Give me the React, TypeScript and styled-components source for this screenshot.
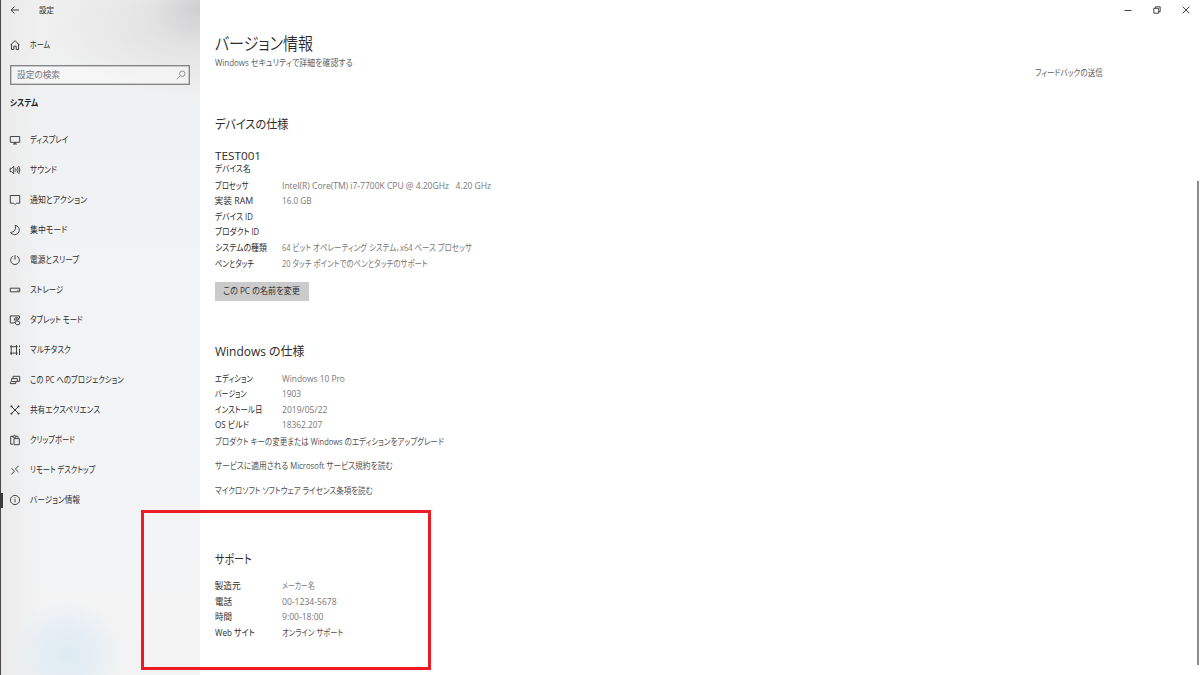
import React, { useLayoutEffect, useRef } from 'react';
import styled, { createGlobalStyle } from 'styled-components';

const GlobalStyle = createGlobalStyle`
  * { box-sizing: border-box; }
  body {
    margin: 0;
    background: #fff;
    font-family: 'Open Sans', 'Noto Sans CJK JP', sans-serif;
    font-feature-settings: 'palt';
    color: #1c1c1c;
    overflow: hidden;
  }
`;

const Window = styled.div`
  position: relative;
  display: flex;
  width: 1200px;
  height: 675px;
  background: #fff;
`;

const Sidebar = styled.aside`
  display: flex;
  flex-direction: column;
  width: 200px;
  height: 675px;
  border-left: 1px solid #4a484b;
  background:
    radial-gradient(circle 56px at 65px 655px, #deebf3 0%, rgba(224, 236, 244, 0.75) 45%, rgba(240, 243, 245, 0) 100%),
    radial-gradient(ellipse 50px 36px at 200px 8px, #cfced0 0%, rgba(212, 211, 213, 0.6) 50%, rgba(225, 225, 226, 0) 100%),
    radial-gradient(ellipse 150px 75px at 195px 25px, #dddcdd 0%, rgba(228, 227, 228, 0.6) 55%, rgba(240, 240, 240, 0) 100%),
    linear-gradient(90deg, #ebebeb 0, rgba(240, 240, 241, 0) 40px),
    linear-gradient(180deg, #efefef 0, #f0f1f2 90px, #f2f3f5 340px, #f3f4f6 500px, #f3f3f3 675px);
`;

const Row = styled.div<{ $h: number; $pl?: number; $gap?: number; $mt?: number }>`
  display: flex;
  align-items: center;
  height: ${p => p.$h}px;
  margin-top: ${p => p.$mt ?? 0}px;
  padding-left: ${p => p.$pl ?? 0}px;
  gap: ${p => p.$gap ?? 0}px;
  flex: none;
`;

const Search = styled.div`
  display: flex;
  align-items: center;
  justify-content: space-between;
  width: 180px;
  height: 20px;
  margin: 0 0 0 9px;
  padding: 0 2px 0 6px;
  border: 1px solid #858586;
  box-shadow: inset 0 0 0 0.5px #a0a0a1;
  background: rgba(255, 255, 255, 0.4);
  flex: none;
`;

const Nav = styled.nav`
  display: flex;
  flex-direction: column;
  padding-top: 4px;
`;

const NavItem = styled.a<{ $active?: boolean }>`
  display: flex;
  align-items: center;
  gap: 8.8px;
  height: 30px;
  padding-left: 8px;
  position: relative;
  &::before {
    content: '';
    position: absolute;
    left: -1px;
    top: 8px;
    width: 2.5px;
    height: 15px;
    background: ${p => (p.$active ? '#3c3c3e' : 'transparent')};
  }
`;

const Icon = styled.svg<{ $color?: string }>`
  width: 12px;
  height: 12px;
  flex: none;
  fill: none;
  stroke: ${p => p.$color ?? '#3a3a3a'};
  stroke-width: 0.95;
`;

const Main = styled.main`
  display: flex;
  flex-direction: column;
  flex: 1;
  padding: 33px 0 0 14.6px;
`;

const Aside = styled.div`
  width: 165.4px;
`;

const Caption = styled.div`
  display: flex;
  align-items: center;
  gap: 17px;
  height: 20px;
  padding-left: 87.4px;
`;

const Feedback = styled.div`
  padding-top: 45px;
`;

const Section = styled.section<{ $mt: number }>`
  display: flex;
  flex-direction: column;
  margin-top: ${p => p.$mt}px;
`;

const DeviceName = styled.div`
  margin-top: 15px;
`;

const SpecList = styled.dl<{ $mt: number }>`
  display: grid;
  grid-template-columns: 67.8px auto;
  grid-auto-rows: 15.6px;
  align-items: center;
  justify-content: start;
  margin: ${p => p.$mt}px 0 0;
`;

const Term = styled.dt`
  margin: 0;
`;

const Detail = styled.dd`
  margin: 0;
`;

const RenameButton = styled.button`
  display: flex;
  align-items: center;
  width: 94px;
  height: 19px;
  margin: 10.4px 0 0 0.4px;
  padding: 0 0 0 8.5px;
  border: 0;
  background: #cbcbcb;
  font: inherit;
  font-feature-settings: inherit;
  color: inherit;
`;

const Highlight = styled.div`
  position: absolute;
  left: 141px;
  top: 510px;
  width: 290px;
  height: 160px;
  border: 3px solid #ed1c24;
`;

const ScrollThumb = styled.div`
  position: absolute;
  left: 1197px;
  top: 181px;
  width: 2px;
  height: 484px;
  background: #8c8c8c;
`;

const Label = styled.span<{ $size: number; $color: string; $weight: number; $lh: number }>`
  display: block;
  width: max-content;
  white-space: pre;
  transform-origin: 0 50%;
  font-size: ${p => p.$size}px;
  font-weight: ${p => p.$weight};
  line-height: ${p => p.$lh}px;
  color: ${p => p.$color};
`;

type TextProps = { children: string; w: number; size?: number; color?: string; weight?: number; lh?: number };

// Condenses or widens a label so that it takes exactly the given width.
function Text({ children, w, size = 8.75, color = '#2b2b2b', weight = 400, lh = 15 }: TextProps) {
  const ref = useRef<HTMLSpanElement>(null);
  useLayoutEffect(() => {
    const fit = () => {
      const el = ref.current;
      if (el) el.style.transform = `scaleX(${w / el.offsetWidth})`;
    };
    fit();
    document.fonts.ready.then(fit);
  }, [w, children]);
  return (
    <Label ref={ref} $size={size} $color={color} $weight={weight} $lh={lh}>
      {children}
    </Label>
  );
}

const icons: Record<string, React.ReactNode> = {
  back: <path d="M10 6H2M5.500 2.500 2 6l3.500 3.500" />,
  home: <path d="M1.500 6 6 1.700 10.500 6M2.500 5.200v5.300h2.300V7.200h2.400v3.300h2.300V5.200" />,
  search: <><circle cx="7.300" cy="4.700" r="2.700" /><path d="M5.400 6.600 1.800 10.200" /></>,
  display: <><path d="M1.300 2.500h9.400v5.800H1.300zM4 10h4" /><path d="M6 8.300v1.700" strokeWidth="1.400" /></>,
  sound: <path d="M1.200 4.300h1.500L4.800 2.300v7.400L2.700 7.700H1.200zM6.600 4.400q1 1.600 0 3.200M8.200 3.200q1.800 2.800 0 5.600M9.700 2q2.400 4 0 8" />,
  notify: <path d="M1.300 1.500h9.400v7.700H7.400L6 10.600 4.600 9.200H1.300z" />,
  moon: <path d="M6 1.400C8.800 1.800 10.500 4 10.300 6.400 10 9 8 10.700 5.400 10.600 3.800 10.500 2.400 9.700 1.600 8.400 5.200 8.300 7.600 5.300 6 1.400z" />,
  power: <path d="M6 1v4.600M4 2.200a4.400 4.400 0 1 0 4 0" />,
  storage: <path d="M1.300 4.200h9.400v3.600H1.300zM8.300 6.300h1.200" />,
  tablet: <><path d="M5 9H1.300V1.900h9.200v2.600" /><path d="M7 8V5q.6-.7 1.100 0v2l2.200.6q.6.200.4.900L10.100 10.700H7.500L5.400 8.300q.5-.8 1.600.1M5.300 6.500q-.2-3 2.200-3.200 2.100.1 2.300 2.700" /></>,
  multi: <path d="M1 2.700h7.700M1 9.100h7.700M2.200 1v10M7.500 1v10M10.500 1.300v2M10.500 4.800v6.200" />,
  project: <path d="M4 4.500V2.300h6.700v5H8.300M2.600 4.600h5.700v3H2.600zM1.300 7.600v2h5.400v-2" />,
  share: <><path d="M2.500 2.500 9.500 9.500M9.500 2.500 2.500 9.500" /><path d="M1.600 2.400h1.800M8.600 2.400h1.800M1.600 9.600h1.800M8.600 9.600h1.800M5 6h2" strokeWidth="1.800" /></>,
  clipboard: <path d="M4 10.200H1.700V2.300h2M7 2.300h2v1.600M3.700 3.200V1.900h.9q.8-1.400 1.500 0h.9v1.300zM5 4.600h5.300v6.100H5z" />,
  remote: <path d="M2.500 4.300 5.500 7.200 2.300 10.300M9.700 1.700 6.400 5 9.500 8" />,
  info: <><circle cx="6" cy="6" r="4.600" /><path d="M6 5.200v3.200M6 3.300v1" /></>,
  minimise: <path d="M2.500 6.500h7" />,
  restore: <path d="M2.800 4.300h4.900v4.900H2.800zM4.300 4.300V2.800h4.900v4.900H7.700" />,
  close: <path d="m2.700 2.700 6.600 6.600M9.300 2.700 2.700 9.300" />,
};

const Glyph = ({ name, color }: { name: string; color?: string }) => (
  <Icon viewBox="0 0 12 12" $color={color}>{icons[name]}</Icon>
);

const nav: [string, string, number][] = [
  ['display', 'ディスプレイ', 38.5],
  ['sound', 'サウンド', 27],
  ['notify', '通知とアクション', 57],
  ['moon', '集中モード', 37],
  ['power', '電源とスリープ', 49],
  ['storage', 'ストレージ', 33],
  ['tablet', 'タブレット モード', 53],
  ['multi', 'マルチタスク', 40.5],
  ['project', 'この PC へのプロジェクション', 93.5],
  ['share', '共有エクスペリエンス', 70.5],
  ['clipboard', 'クリップボード', 45],
  ['remote', 'リモート デスクトップ', 65.5],
  ['info', 'バージョン情報', 50],
];

type Spec = [string, number, string?, number?, string?];
const device: Spec[] = [
  ['プロセッサ', 33.5, 'Intel(R) Core(TM) i7-7700K CPU @ 4.20GHz   4.20 GHz', 209],
  ['実装 RAM', 39, '16.0 GB', 30],
  ['デバイス ID', 38],
  ['プロダクト ID', 44],
  ['システムの種類', 52, '64 ビット オペレーティング システム、x64 ベース プロセッサ', 190],
  ['ペンとタッチ', 39, '20 タッチ ポイントでのペンとタッチのサポート', 146],
];
const windows: Spec[] = [
  ['エディション', 38, 'Windows 10 Pro', 63],
  ['バージョン', 32, '1903', 19],
  ['インストール日', 47, '2019/05/22', 45],
  ['OS ビルド', 34, '18362.207', 40],
];
const support: Spec[] = [
  ['製造元', 26, 'メーカー名', 33],
  ['電話', 17.5, '00-1234-5678', 55],
  ['時間', 17.5, '9:00-18:00', 41],
  ['Web サイト', 39.5, 'オンライン サポート', 61, '#505050'],
];

const Specs = ({ items, mt }: { items: Spec[]; mt: number }) => (
  <SpecList $mt={mt}>
    {items.map(([name, w, value, vw, color]) => (
      <React.Fragment key={name}>
        <Term><Text w={w}>{name}</Text></Term>
        <Detail>{value && <Text w={vw!} color={color ?? '#777'}>{value}</Text>}</Detail>
      </React.Fragment>
    ))}
  </SpecList>
);

export default function App() {
  return (
    <Window>
      <GlobalStyle />
      <Sidebar>
        <Row $h={20} $pl={8} $gap={18}><Glyph name="back" /><Text w={15} size={8} lh={14}>設定</Text></Row>
        <Row $h={40} $mt={5} $pl={8} $gap={9}><Glyph name="home" /><Text w={20}>ホーム</Text></Row>
        <Search><Text w={42.5} color="#777" lh={14}>設定の検索</Text><Glyph name="search" color="#8a8a8a" /></Search>
        <Row $h={36} $pl={9}><Text w={28} weight={600} color="#222">システム</Text></Row>
        <Nav>
          {nav.map(([icon, label, w]) => (
            <NavItem key={label} $active={icon === 'info'}>
              <Glyph name={icon} /><Text w={w} lh={16}>{label}</Text>
            </NavItem>
          ))}
        </Nav>
      </Sidebar>
      <Main>
        <Text w={98} size={17.5} weight={350} color="#2b2b2b" lh={20}>バージョン情報</Text>
        <Row $h={21}><Text w={138} color="#5c5c5c">Windows セキュリティで詳細を確認する</Text></Row>
        <Section $mt={42}>
          <Text w={73} size={12.5} lh={18}>デバイスの仕様</Text>
          <DeviceName>
            <Text w={46} size={11.5} lh={13}>TEST001</Text>
            <Text w={36} lh={14}>デバイス名</Text>
          </DeviceName>
          <Specs items={device} mt={2.4} />
          <RenameButton><Text w={77}>この PC の名前を変更</Text></RenameButton>
        </Section>
        <Section $mt={42}>
          <Text w={89} size={12.5} lh={18}>Windows の仕様</Text>
          <Specs items={windows} mt={10} />
          <Text w={229} color="#505050" lh={16}>プロダクト キーの変更または Windows のエディションをアップグレード</Text>
          <Row $h={33}><Text w={178} color="#505050">サービスに適用される Microsoft サービス規約を読む</Text></Row>
          <Text w={158} color="#505050" lh={16}>マイクロソフト ソフトウェア ライセンス条項を読む</Text>
        </Section>
        <Section $mt={52}>
          <Text w={37} size={12.5} lh={18}>サポート</Text>
          <Specs items={support} mt={10} />
        </Section>
      </Main>
      <Aside>
        <Caption><Glyph name="minimise" /><Glyph name="restore" /><Glyph name="close" /></Caption>
        <Feedback><Text w={67.5} color="#5c5c5c" lh={16}>フィードバックの送信</Text></Feedback>
      </Aside>
      <ScrollThumb />
      <Highlight />
    </Window>
  );
}
